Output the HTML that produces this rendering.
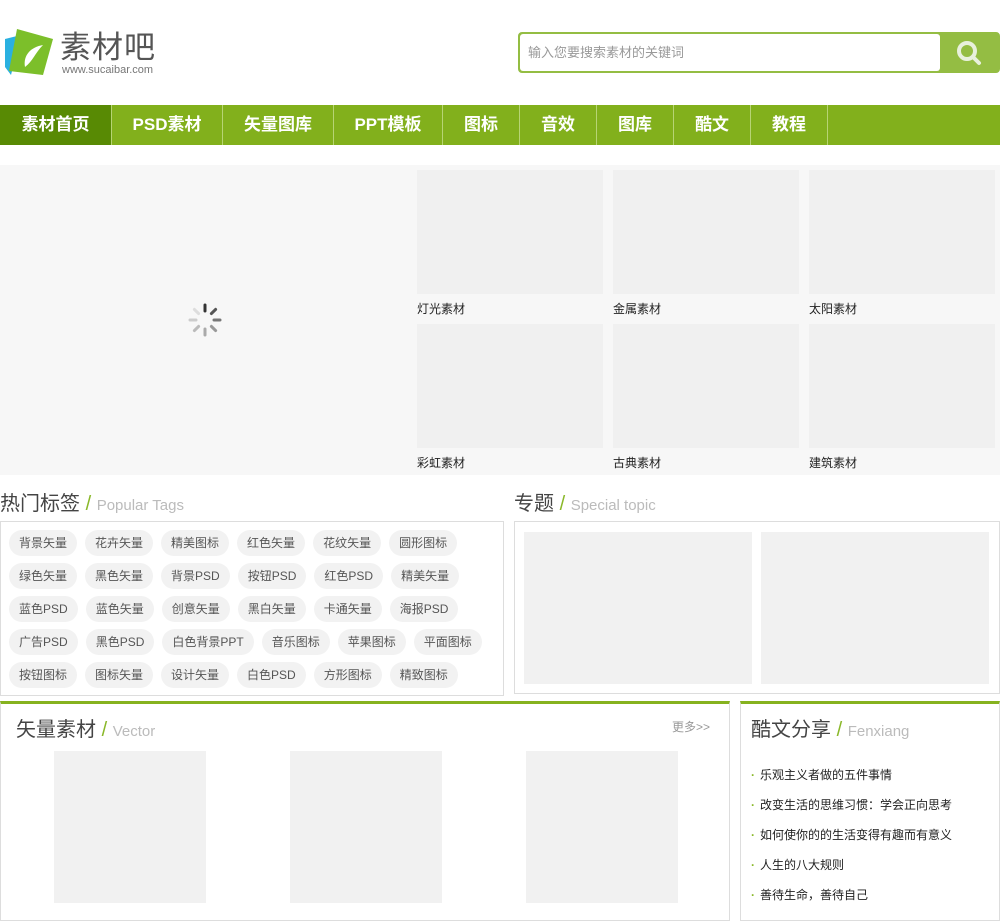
<!DOCTYPE html>
<html><head><meta charset="utf-8"><style>
*{margin:0;padding:0;box-sizing:border-box}
body{width:1000px;height:909px;overflow:hidden;background:#fff;font-family:"Liberation Sans","Noto Sans CJK SC",sans-serif;position:relative;font-size:12px;color:#333}
.a{position:absolute}
.nav{left:0;top:105px;width:1000px;height:40px;background:#82b01c}
.nav div{position:absolute;top:0;height:40px;line-height:40px;color:#fff;font-weight:bold;font-size:17px;text-align:center;border-right:1px solid #b7d474}
.th{background:#f0f0f0;width:186px;height:124px}
.cap{font-size:12px;color:#222}
.h{font-size:20px;color:#444}
.h b{color:#8ab82a;font-weight:normal}
.h span{font-size:15px;color:#bbb}
.tags{left:0;top:521px;width:504px;height:175px;border:1px solid #ddd;padding:8px 0 0 8px}
.tags i{font-style:normal;display:inline-block;height:26px;line-height:26px;background:#f2f2f2;border-radius:13px;padding:0 10px;margin:0 8px 7px 0;font-size:12px;color:#555}
.g{background:#f1f1f1}
li{list-style:none;height:30px;font-size:12px;color:#222}
li:before{content:"·";color:#8ab82a;margin-right:5px;font-weight:bold}
</style></head><body>
<svg class="a" style="left:3px;top:27px" width="52" height="50" viewBox="0 0 52 50">
<path d="M2 12 L18 8 L8 48 L2 40Z" fill="#2ab0e0"/>
<path d="M14 2 L50 12 L40 48 L6 44Z" fill="#7cbf2a"/>
<path d="M22 40 C20 28 28 20 40 18 C32 26 30 34 22 40Z" fill="#fff"/>
</svg>
<div class="a" style="left:60px;top:30px;font-size:31px;color:#555;letter-spacing:1px;line-height:36px">素材吧</div>
<div class="a" style="left:62px;top:64px;font-size:11px;color:#777">www.sucaibar.com</div>
<div class="a" style="left:518px;top:32px;width:482px;height:41px;border:2px solid #94bd43;border-radius:4px;background:#94bd43"></div>
<div class="a" style="left:520px;top:34px;width:420px;height:37px;background:#fff;border-radius:3px;line-height:37px;padding-left:8px;color:#999;font-size:13px">输入您要搜索素材的关键词</div>
<svg class="a" style="left:955px;top:39px" width="28" height="28" viewBox="0 0 28 28"><circle cx="12" cy="12" r="8" fill="none" stroke="#e8f0dc" stroke-width="4"/><path d="M18 18 L24 24" stroke="#e8f0dc" stroke-width="4" stroke-linecap="round"/></svg>
<div class="a nav">
<div style="left:0;width:112px;background:#588a04">素材首页</div>
<div style="left:112px;width:111px">PSD素材</div>
<div style="left:223px;width:111px">矢量图库</div>
<div style="left:334px;width:109px">PPT模板</div>
<div style="left:443px;width:77px">图标</div>
<div style="left:520px;width:77px">音效</div>
<div style="left:597px;width:77px">图库</div>
<div style="left:674px;width:77px">酷文</div>
<div style="left:751px;width:77px">教程</div>
</div>
<div class="a" style="left:0;top:165px;width:1000px;height:310px;background:#f7f7f7"></div>
<svg class="a" style="left:188px;top:303px" width="34" height="34" viewBox="-17 -17 34 34">
<g stroke-width="3" stroke-linecap="round">
<line x1="0" y1="-9" x2="0" y2="-15" stroke="#333"/>
<line x1="6.4" y1="-6.4" x2="10.6" y2="-10.6" stroke="#555"/>
<line x1="9" y1="0" x2="15" y2="0" stroke="#777"/>
<line x1="6.4" y1="6.4" x2="10.6" y2="10.6" stroke="#999"/>
<line x1="0" y1="9" x2="0" y2="15" stroke="#aaa"/>
<line x1="-6.4" y1="6.4" x2="-10.6" y2="10.6" stroke="#bbb"/>
<line x1="-9" y1="0" x2="-15" y2="0" stroke="#ccc"/>
<line x1="-6.4" y1="-6.4" x2="-10.6" y2="-10.6" stroke="#ddd"/>
</g></svg>
<div class="a th" style="left:417px;top:170px"></div><div class="a th" style="left:613px;top:170px"></div><div class="a th" style="left:809px;top:170px"></div>
<div class="a th" style="left:417px;top:324px"></div><div class="a th" style="left:613px;top:324px"></div><div class="a th" style="left:809px;top:324px"></div>
<div class="a cap" style="left:417px;top:300px">灯光素材</div><div class="a cap" style="left:613px;top:300px">金属素材</div><div class="a cap" style="left:809px;top:300px">太阳素材</div>
<div class="a cap" style="left:417px;top:454px">彩虹素材</div><div class="a cap" style="left:613px;top:454px">古典素材</div><div class="a cap" style="left:809px;top:454px">建筑素材</div>
<div class="a h" style="left:0;top:487px">热门标签 <b>/</b> <span>Popular Tags</span></div>
<div class="a h" style="left:514px;top:487px">专题 <b>/</b> <span>Special topic</span></div>
<div class="a tags">
<i>背景矢量</i><i>花卉矢量</i><i>精美图标</i><i>红色矢量</i><i>花纹矢量</i><i>圆形图标</i><br>
<i>绿色矢量</i><i>黑色矢量</i><i>背景PSD</i><i>按钮PSD</i><i>红色PSD</i><i>精美矢量</i><br>
<i>蓝色PSD</i><i>蓝色矢量</i><i>创意矢量</i><i>黑白矢量</i><i>卡通矢量</i><i>海报PSD</i><br>
<i>广告PSD</i><i>黑色PSD</i><i>白色背景PPT</i><i>音乐图标</i><i>苹果图标</i><i>平面图标</i><br>
<i>按钮图标</i><i>图标矢量</i><i>设计矢量</i><i>白色PSD</i><i>方形图标</i><i>精致图标</i>
</div>
<div class="a" style="left:514px;top:521px;width:486px;height:173px;border:1px solid #ddd"></div>
<div class="a g" style="left:524px;top:532px;width:228px;height:152px"></div>
<div class="a g" style="left:761px;top:532px;width:228px;height:152px"></div>
<div class="a" style="left:0;top:701px;width:730px;height:220px;border:1px solid #ddd;border-top:3px solid #86b21f"></div>
<div class="a h" style="left:16px;top:713px">矢量素材 <b>/</b> <span>Vector</span></div>
<div class="a" style="left:672px;top:718px;color:#999">更多&gt;&gt;</div>
<div class="a g" style="left:54px;top:751px;width:152px;height:152px"></div>
<div class="a g" style="left:290px;top:751px;width:152px;height:152px"></div>
<div class="a g" style="left:526px;top:751px;width:152px;height:152px"></div>
<div class="a" style="left:740px;top:701px;width:260px;height:220px;border:1px solid #ddd;border-top:3px solid #86b21f"></div>
<div class="a h" style="left:751px;top:713px">酷文分享 <b>/</b> <span>Fenxiang</span></div>
<ul class="a" style="left:751px;top:766px">
<li>乐观主义者做的五件事情</li><li>改变生活的思维习惯：学会正向思考</li><li>如何使你的的生活变得有趣而有意义</li><li>人生的八大规则</li><li>善待生命，善待自己</li>
</ul>
</body></html>
